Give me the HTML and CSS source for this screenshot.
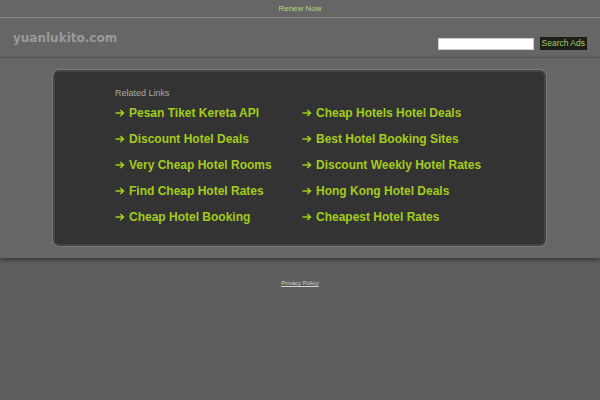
FILE: index.html
```
<!DOCTYPE html>
<html>
<head>
<meta charset="utf-8">
<link rel="stylesheet" href="styles.css">
</head>
<body>
<div class="topbar"><a href="#" class="renew">Renew Now</a></div>
<div class="header">
  <div class="logo">yuanlukito.com</div>
  <form class="search">
    <input type="text" class="search-input">
    <button type="button" class="search-btn">Search Ads</button>
  </form>
</div>
<div class="main">
  <div class="box">
    <div class="related">Related Links</div>
    <div class="links">
      <a href="#" class="link"><svg class="arrow" viewBox="0 0 10 8"><path d="M0.5 4H8.5M5.3 1L8.5 4L5.3 7"/></svg>Pesan Tiket Kereta API</a>
      <a href="#" class="link"><svg class="arrow" viewBox="0 0 10 8"><path d="M0.5 4H8.5M5.3 1L8.5 4L5.3 7"/></svg>Cheap Hotels Hotel Deals</a>
      <a href="#" class="link"><svg class="arrow" viewBox="0 0 10 8"><path d="M0.5 4H8.5M5.3 1L8.5 4L5.3 7"/></svg>Discount Hotel Deals</a>
      <a href="#" class="link"><svg class="arrow" viewBox="0 0 10 8"><path d="M0.5 4H8.5M5.3 1L8.5 4L5.3 7"/></svg>Best Hotel Booking Sites</a>
      <a href="#" class="link"><svg class="arrow" viewBox="0 0 10 8"><path d="M0.5 4H8.5M5.3 1L8.5 4L5.3 7"/></svg>Very Cheap Hotel Rooms</a>
      <a href="#" class="link"><svg class="arrow" viewBox="0 0 10 8"><path d="M0.5 4H8.5M5.3 1L8.5 4L5.3 7"/></svg>Discount Weekly Hotel Rates</a>
      <a href="#" class="link"><svg class="arrow" viewBox="0 0 10 8"><path d="M0.5 4H8.5M5.3 1L8.5 4L5.3 7"/></svg>Find Cheap Hotel Rates</a>
      <a href="#" class="link"><svg class="arrow" viewBox="0 0 10 8"><path d="M0.5 4H8.5M5.3 1L8.5 4L5.3 7"/></svg>Hong Kong Hotel Deals</a>
      <a href="#" class="link"><svg class="arrow" viewBox="0 0 10 8"><path d="M0.5 4H8.5M5.3 1L8.5 4L5.3 7"/></svg>Cheap Hotel Booking</a>
      <a href="#" class="link"><svg class="arrow" viewBox="0 0 10 8"><path d="M0.5 4H8.5M5.3 1L8.5 4L5.3 7"/></svg>Cheapest Hotel Rates</a>
    </div>
  </div>
</div>
<div class="footer"><a href="#" class="privacy">Privacy Policy</a></div>
</body>
</html>
```
FILE: styles.css
```
* { box-sizing: border-box; }
html, body { margin: 0; padding: 0; }
body {
  background: #5f5f5f;
  font-family: "Liberation Sans", Arial, sans-serif;
  height: 400px;
  overflow: hidden;
}
.topbar {
  height: 18px;
  background: #666;
  border-bottom: 1px solid #8a8a8a;
  text-align: center;
  font-size: 8px;
  line-height: 17px;
}
.renew { color: #b5d67a; text-decoration: none; }
.header {
  height: 40px;
  background: #666;
  border-bottom: 1px solid #575757;
  display: flex;
  justify-content: space-between;
  align-items: flex-start;
  padding: 0 13px;
}
.logo {
  font-family: "DejaVu Sans", sans-serif;
  font-weight: bold;
  font-size: 12px;
  color: #9a9a9a;
  margin-top: 13px;
}
.search { display: flex; align-items: center; gap: 6px; margin-top: 19px; }
.search-input {
  width: 96px; height: 12px;
  border: 1px solid #ccc;
  background: #fff;
  padding: 0; margin: 0;
}
.search-btn {
  height: 13px;
  background: #1b1d17;
  color: #a8cc6a;
  border: none;
  font-family: "Liberation Sans", Arial, sans-serif;
  font-size: 8.5px;
  padding: 0 2px;
  line-height: 13px;
}
.main {
  background: #666;
  height: 200px;
  padding: 12px 0 0 53px;
  box-shadow: 0 2px 5px rgba(0,0,0,0.45);
  position: relative;
}
.box {
  width: 493px;
  height: 176px;
  background: #333;
  border: 2px solid #444;
  border-radius: 6px;
  box-shadow: 0 0 0 1px #7a7a7a;
  padding: 16px 0 0 60px;
}
.related {
  color: #a9a9a9;
  font-size: 9px;
  line-height: 11px;
}
.links {
  display: grid;
  grid-template-columns: 187px 200px;
  grid-auto-rows: 26px;
  margin-top: 1px;
}
.link {
  color: #a3cc1c;
  font-weight: bold;
  font-size: 12px;
  line-height: 26px;
  text-decoration: none;
  white-space: nowrap;
  display: flex;
  align-items: center;
}
.arrow {
  width: 10px;
  height: 8px;
  margin-right: 4px;
  fill: none;
  stroke: #a3cc1c;
  stroke-width: 1.6;
  flex: none;
}
.footer {
  text-align: center;
  padding-top: 22px;
  font-size: 6px;
}
.privacy { color: #d0d0d0; }
```
